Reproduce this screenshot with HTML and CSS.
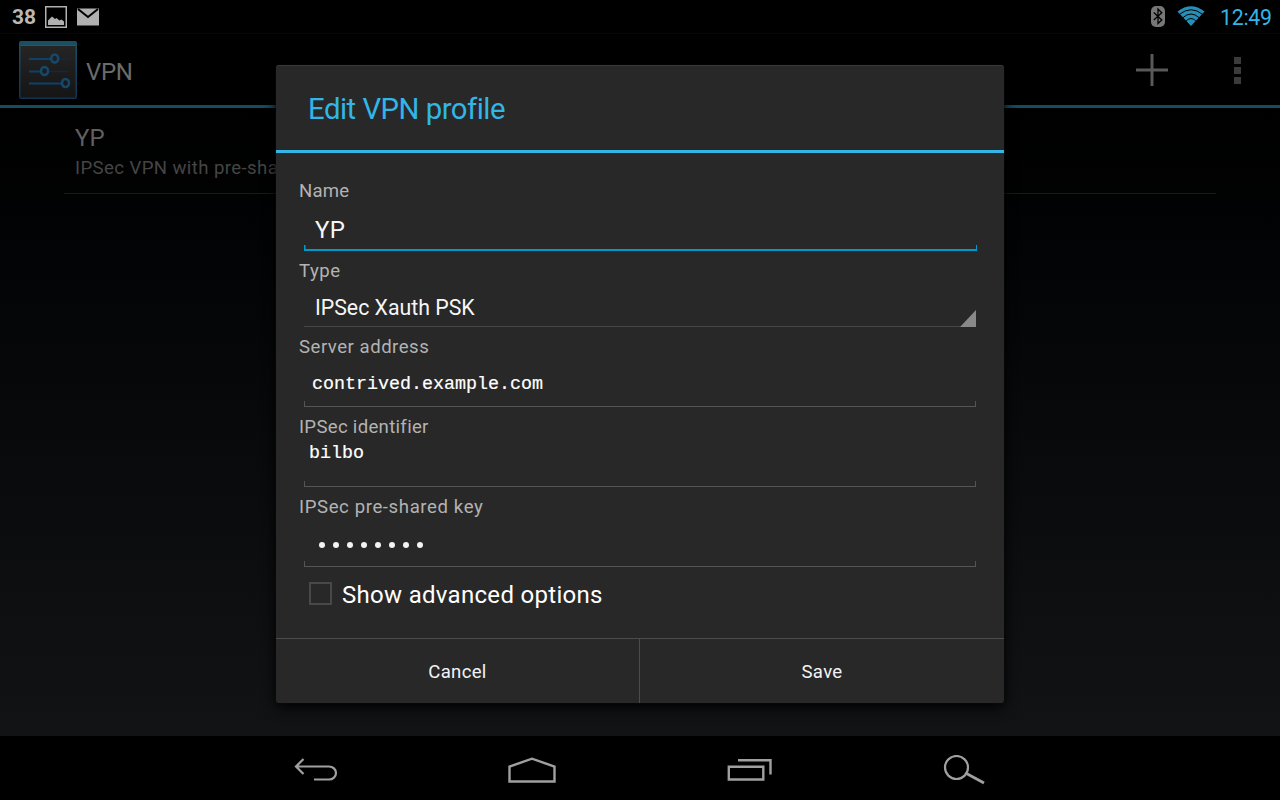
FILE: index.html
```html
<!DOCTYPE html>
<html lang="en">
<head>
<meta charset="utf-8">
<title>VPN</title>
<link rel="stylesheet" href="styles.css">
</head>
<body>
<div class="screen">
  <header class="status">
    <span class="battery">38</span>
    <svg class="picture" width="22" height="22" viewBox="0 0 22 22"><rect x=".75" y=".75" width="20.5" height="20.5" fill="none" stroke="#b0b0b0" stroke-width="1.5"/><path d="M3 19v-4.500l4-4 3 2.500 1.500-1 3 2.500 2-1L19 15.500V19z" fill="#b0b0b0"/></svg>
    <svg class="mail" width="22" height="18" viewBox="0 0 22 18"><path d="M0 .5h22V17.500H0z" fill="#b0b0b0"/><path d="M1 1l10 8 10-8" fill="none" stroke="#000" stroke-width="2"/></svg>
    <span class="spacer"></span>
    <svg class="bluetooth" width="14" height="21" viewBox="0 0 14 21"><rect width="14" height="21" rx="5" fill="#777"/><path d="M2.800 6.500l8 7.500L7 17.500V3l3.800 3.800-8 7.200" fill="none" stroke="#000" stroke-width="1.300"/></svg>
    <svg class="wifi" width="28" height="20" viewBox="0 0 28 20"><path d="M.5 5.500Q14-5 27.500 5.500L14 20z" fill="#268fb8"/><path d="M2.500 8.300Q14-.8 25.500 8.300M5.500 12Q14 4 22.500 12M8.500 15.500Q14 9.500 19.500 15.500" fill="none" stroke="#000" stroke-width="1"/></svg>
    <time class="clock">12:49</time>
  </header>

  <div class="actionbar">
    <svg class="app-icon" width="60" height="60" viewBox="0 0 60 60">
      <defs><linearGradient id="face" x1="0" y1="0" x2="0" y2="1"><stop offset="0" stop-color="#252525"/><stop offset="1" stop-color="#151515"/></linearGradient>
      <linearGradient id="edge" x1="0" y1="0" x2="0" y2="1"><stop offset="0" stop-color="#1b5064"/><stop offset="1" stop-color="#0e3355"/></linearGradient></defs>
      <rect x="1" y="1" width="58" height="58" rx="2" fill="url(#edge)"/>
      <path d="M2.500 6h55v51.500h-55z" fill="url(#face)"/><path d="M2.500 5.500h55" stroke="#454b4d"/>
      <g fill="none" stroke="#0f416a" stroke-width="2"><path d="M11 19h22M11 31.500h12M11 43.500h32"/><path d="M40 19h10M30 31.500h20" stroke="#112a40" stroke-width="1.500"/><g stroke="#15496c" stroke-width="2.500"><ellipse cx="36.700" cy="18.500" rx="3.500" ry="4"/><ellipse cx="26.500" cy="31" rx="3.500" ry="4"/><ellipse cx="47.500" cy="43" rx="3.500" ry="4"/></g></g>
    </svg>
    <span class="bar-title">VPN</span>
    <span class="spacer"></span>
    <svg class="add" width="32" height="32" viewBox="0 0 32 32"><path d="M16 0v32M0 16h32" stroke="#595959" stroke-width="3"/></svg>
    <svg class="overflow" width="7" height="27" viewBox="0 0 7 27"><path d="M0 0h7v7H0zM0 10h7v7H0zM0 20h7v7H0z" fill="#3b3b3b"/></svg>
  </div>

  <main class="list">
    <div class="profile">
      <div class="profile-name">YP</div>
      <div class="profile-type">IPSec VPN with pre-shared keys</div>
    </div>
  </main>

  <nav class="navbar">
    <svg width="44" height="24" viewBox="0 0 44 24"><path d="M2 8.500h33a7 6.500 0 0 1 0 13H20M9.500 1L2 8.500 9.500 16" fill="none" stroke="#a0a0a0" stroke-width="2.200"/></svg>
    <svg width="48" height="26" viewBox="0 0 48 26"><path d="M1.500 24.500V9.500L24 1.700l22.500 7.800v15z" fill="none" stroke="#a0a0a0" stroke-width="2.400"/></svg>
    <svg width="46" height="24" viewBox="0 0 46 24"><path d="M1.800 8.700h34.500v12.800H1.800zM11 2.200h32.500V16.500" fill="none" stroke="#a0a0a0" stroke-width="2.400"/></svg>
    <svg width="42" height="30" viewBox="0 0 42 30"><circle cx="13.500" cy="12.500" r="11.500" fill="none" stroke="#a0a0a0" stroke-width="2.200"/><path d="M23.500 18.500L41 28" stroke="#a0a0a0" stroke-width="2.800"/></svg>
  </nav>

  <section class="dialog">
    <h1 class="dialog-title"><span>Edit VPN profile</span></h1>
    <div class="form">
      <div class="field"><span class="label l-name">Name</span><div class="value focus"><span class="big">YP</span></div></div>
      <div class="field select"><span class="label l-type">Type</span><div class="value spinner"><span class="option">IPSec Xauth PSK</span><i class="arrow"></i></div></div>
      <div class="field"><span class="label l-server">Server address</span><div class="value server"><span class="mono">contrived.example.com</span></div></div>
      <div class="field"><span class="label l-ident">IPSec identifier</span><div class="value ident"><span class="mono">bilbo</span></div></div>
      <div class="field"><span class="label l-key">IPSec pre-shared key</span><div class="value key"><i class="dot"></i><i class="dot"></i><i class="dot"></i><i class="dot"></i><i class="dot"></i><i class="dot"></i><i class="dot"></i><i class="dot"></i></div></div>
      <div class="check"><i class="box"></i><span class="check-text">Show advanced options</span></div>
    </div>
    <div class="buttons"><div class="button">Cancel</div><div class="button">Save</div></div>
  </section>
</div>
</body>
</html>
```
FILE: styles.css
```css
* { box-sizing: border-box; }
body { margin: 0; background: #000; font-family: Roboto, "Noto Sans", sans-serif; }
svg { display: block; flex: none; }
.screen { position: relative; width: 1280px; height: 800px; overflow: hidden; display: flex; flex-direction: column; }
.spacer { flex: 1; }

.status { height: 34px; display: flex; align-items: center; padding: 0 8px 0 12px; border-bottom: 1px solid #070707; }
.battery { width: 33px; color: #b8b8b8; font-size: 21px; font-weight: 700; line-height: 32px; }
.mail { margin-left: 10px; }
.bluetooth { margin-right: 12px; }
.wifi { margin: 0 15px 2px 0; }
.clock { width: 52px; font-size: 21.3px; line-height: 34px; color: #33b5e5; letter-spacing: -.25px; padding-top: 3px; }

.actionbar { height: 74px; display: flex; align-items: center; padding: 0 39px 3px 18px; border-bottom: 3px solid #144c60; }
.app-icon { margin-top: 3px; }
.bar-title { margin: 7px 0 0 8px; font-size: 24px; color: #6b6b6b; letter-spacing: -.3px; }
.add { margin-right: 66px; margin-top: 4px; }
.overflow { margin-top: 5px; }

.list { height: 628px; padding: 0 64px; background: linear-gradient(#000, #020304 20%, #111315); }
.profile { height: 86px; padding: 15px 11px 0; border-bottom: 1px solid #18191a; white-space: nowrap; }
.profile-name { font-size: 24px; line-height: 30px; color: #606060; }
.profile-type { font-size: 18.6px; line-height: 30px; color: #454545; letter-spacing: .4px; }

.navbar { height: 64px; padding: 3px 295px 0 294px; display: flex; align-items: center; justify-content: space-between; background: #000; }

.dialog { position: absolute; left: 276px; top: 65px; width: 728px; height: 638px; display: flex; flex-direction: column; background: #282828; border-radius: 3px; box-shadow: 0 0 2px #111, 0 4px 14px #000; border-top: 1px solid #393939; }
.dialog-title { height: 87px; margin: 0; padding: 0 32px; border-bottom: 3px solid #33b5e5; font-size: 29.3px; font-weight: 400; line-height: 86px; color: #33b5e5; letter-spacing: -.5px; }
.form { height: 485px; padding: 25px 28px 0; }
.field { height: 80px; }
.field.select { height: 76px; }
.label { display: block; width: max-content; height: 24px; margin-left: -5px; font-size: 18.6px; line-height: 26px; color: #b3b3b3; white-space: nowrap; letter-spacing: .3px; }
.l-name { letter-spacing: .15px; }
.l-type { letter-spacing: .5px; }
.l-server { letter-spacing: .5px; }
.l-key { letter-spacing: .6px; }
.value { height: 49px; padding-left: 11px; display: flex; align-items: center; color: #f6f6f6;
  background: linear-gradient(#555, #555) 0 100% / 100% 1.500px no-repeat, linear-gradient(#555, #555) 0 100% / 1px 6px no-repeat, linear-gradient(#555, #555) 100% 100% / 1px 6px no-repeat; }
.value.focus { height: 49px; margin-right: -1px; padding-top: 7px; background: linear-gradient(#0099cc, #0099cc) 0 100% / 100% 2px no-repeat, linear-gradient(#0099cc, #0099cc) 0 100% / 1.500px 6px no-repeat, linear-gradient(#0099cc, #0099cc) 100% 100% / 1.500px 6px no-repeat; }
.value.spinner { height: 45px; padding-top: 6px; justify-content: space-between; background: linear-gradient(#484848, #484848) 0 100% / 100% 1px no-repeat; }
.big { font-size: 24px; letter-spacing: .3px; }
.option { font-size: 21.3px; }
.arrow { align-self: flex-end; width: 16px; height: 17px; background: #898989; clip-path: polygon(100% 0, 100% 100%, 0 100%); }
.value.server { padding-left: 8px; padding-top: 5px; }
.value.ident { align-items: flex-start; padding-left: 5px; padding-top: 6px; }
.mono { font-family: "Liberation Mono", monospace; font-size: 18.330px; line-height: 20px; color: #fff; -webkit-text-stroke: .2px #fff; }
.value.key { gap: 8px; padding-left: 15px; padding-top: 5px; }
.dot { width: 6px; height: 6px; border-radius: 50%; background: #f3f3f3; }
.check { height: 40px; display: flex; align-items: center; padding-left: 5px; font-size: 24px; color: #fff; white-space: nowrap; }
.check-text { padding-top: 2px; letter-spacing: .3px; }
.box { width: 23px; height: 23px; margin: 0 10px 1px 0; border: 2px solid #484848; }
.buttons { flex: 1; display: flex; border-top: 1px solid #4c4c4c; }
.button { flex: 0 0 363px; display: flex; align-items: center; justify-content: center; padding-top: 2px; color: #f3f3f3; font-size: 18.6px; letter-spacing: .3px; }
.button + .button { flex: 1; border-left: 1px solid #4c4c4c; }
```
